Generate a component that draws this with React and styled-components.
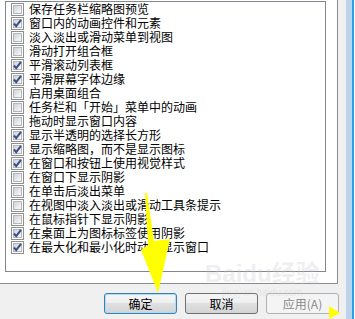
import styled, { createGlobalStyle, css } from "styled-components";

const GlobalStyle = createGlobalStyle`
  html, body {
    margin: 0;
    padding: 0;
    background: #ffffff;
  }
  body {
    font-family: "Noto Sans CJK SC", "Noto Sans", sans-serif;
  }
`;

const effects = [
  { label: "保存任务栏缩略图预览", checked: false },
  { label: "窗口内的动画控件和元素", checked: true },
  { label: "淡入淡出或滑动菜单到视图", checked: false },
  { label: "滑动打开组合框", checked: false },
  { label: "平滑滚动列表框", checked: true },
  { label: "平滑屏幕字体边缘", checked: true },
  { label: "启用桌面组合", checked: false },
  { label: "任务栏和「开始」菜单中的动画", checked: false },
  { label: "拖动时显示窗口内容", checked: false },
  { label: "显示半透明的选择长方形", checked: true },
  { label: "显示缩略图，而不是显示图标", checked: true },
  { label: "在窗口和按钮上使用视觉样式", checked: true },
  { label: "在窗口下显示阴影", checked: false },
  { label: "在单击后淡出菜单", checked: false },
  { label: "在视图中淡入淡出或滑动工具条提示", checked: false },
  { label: "在鼠标指针下显示阴影", checked: false },
  { label: "在桌面上为图标标签使用阴影", checked: true },
  { label: "在最大化和最小化时动态显示窗口", checked: true },
];

function CheckBox({ checked }) {
  return (
    <Box>
      <BoxInner />
      {checked && (
        <Tick viewBox="0 0 13 13">
          <path d="M3 6.5 L5.2 9.2 L10 2.8" fill="none" stroke="#3a4f8a" strokeWidth="2" />
        </Tick>
      )}
    </Box>
  );
}

function App() {
  return (
    <Screen>
      <GlobalStyle />
      <Dialog>
        <TabPage>
          <ListBox>
            {effects.map((item) => (
              <Row key={item.label}>
                <CheckBox checked={item.checked} />
                <Label>{item.label}</Label>
              </Row>
            ))}
          </ListBox>
        </TabPage>
        <ButtonBar>
          <Button $variant="default">确定</Button>
          <Button>取消</Button>
          <Button $variant="disabled">应用(A)</Button>
        </ButtonBar>
      </Dialog>
      <Frame />
      <FrameEdge />

      <Watermark>
        <WatermarkBig>Baidu经验</WatermarkBig>
        <WatermarkSmall>jingyan.baidu.com</WatermarkSmall>
      </Watermark>

      <Annotation viewBox="0 0 355 319">
        <polygon
          points="145,193 147,193 154,241 170,239 158,293 141,250 148,245"
          fill="#ffff00"
        />
        <polygon points="329,306 340,313 329,319" fill="#ffff00" />
      </Annotation>
    </Screen>
  );
}

const Screen = styled.div`
  position: relative;
  width: 355px;
  height: 319px;
  overflow: hidden;
  display: flex;
  background: #ffffff;
`;

const Dialog = styled.div`
  width: 346px;
  display: flex;
  flex-direction: column;
  background: #f0f0f0;
`;

const TabPage = styled.div`
  box-sizing: border-box;
  width: 338px;
  height: 284px;
  padding: 1px 0 0 5px;
  background: #ffffff;
  border-right: 1px solid #898c95;
  border-bottom: 1px solid #898c95;
`;

const ListBox = styled.div`
  box-sizing: border-box;
  width: 321px;
  height: 271px;
  border: 1px solid #828790;
  background: #ffffff;
`;

const Row = styled.div`
  display: flex;
  align-items: center;
  gap: 5px;
  height: 14px;
  padding-left: 5px;
`;

const Box = styled.span`
  position: relative;
  box-sizing: border-box;
  flex: none;
  width: 13px;
  height: 13px;
  border: 1px solid #8e8f8f;
  background: #ffffff;
`;

const BoxInner = styled.span`
  position: absolute;
  inset: 1px;
  box-sizing: border-box;
  border: 1px solid #b3b6bb;
  background: linear-gradient(135deg, #cfd2d7 0%, #eceef0 70%, #f7f7f7 100%);
`;

const Tick = styled.svg`
  position: absolute;
  left: -1px;
  top: -1px;
  width: 13px;
  height: 13px;
`;

const Label = styled.span`
  font-size: 12px;
  line-height: 14px;
  color: #000000;
  white-space: nowrap;
`;

const ButtonBar = styled.div`
  display: flex;
  justify-content: flex-end;
  gap: 8px;
  padding: 9px 7px 0 0;
`;

const Button = styled.button`
  box-sizing: border-box;
  width: 73px;
  height: 21px;
  padding: 0;
  border: 1px solid #707070;
  border-radius: 3px;
  font-family: "Noto Sans CJK SC", "Noto Sans", sans-serif;
  font-size: 12px;
  line-height: 19px;
  color: #000000;
  background: linear-gradient(#f6f6f6 0%, #eeeeee 50%, #e0e0e0 50%, #d3d3d3 100%);

  ${(p) =>
    p.$variant === "default" &&
    css`
      border-color: #3c7fb1;
      box-shadow: inset 0 0 0 1px #a8dcf7;
    `}

  ${(p) =>
    p.$variant === "disabled" &&
    css`
      border-color: #adb2b5;
      background: #f4f4f4;
      color: #8a8a8a;
    `}
`;

const Frame = styled.div`
  width: 6px;
  background: #bcd3ec;
`;

const FrameEdge = styled.div`
  width: 2px;
  background: #2ba2e6;
`;

const Watermark = styled.div`
  position: absolute;
  left: 205px;
  top: 261px;
  display: flex;
  flex-direction: column;
  align-items: center;
  pointer-events: none;
  color: rgba(200, 200, 200, 0.3);
  font-family: "Liberation Sans", "Noto Sans CJK SC", sans-serif;
`;

const WatermarkBig = styled.span`
  font-size: 24px;
  font-weight: bold;
  line-height: 26px;
`;

const WatermarkSmall = styled.span`
  font-size: 10px;
  line-height: 12px;
`;

const Annotation = styled.svg`
  position: absolute;
  left: 0;
  top: 0;
  width: 355px;
  height: 319px;
  pointer-events: none;
`;

export default App;
